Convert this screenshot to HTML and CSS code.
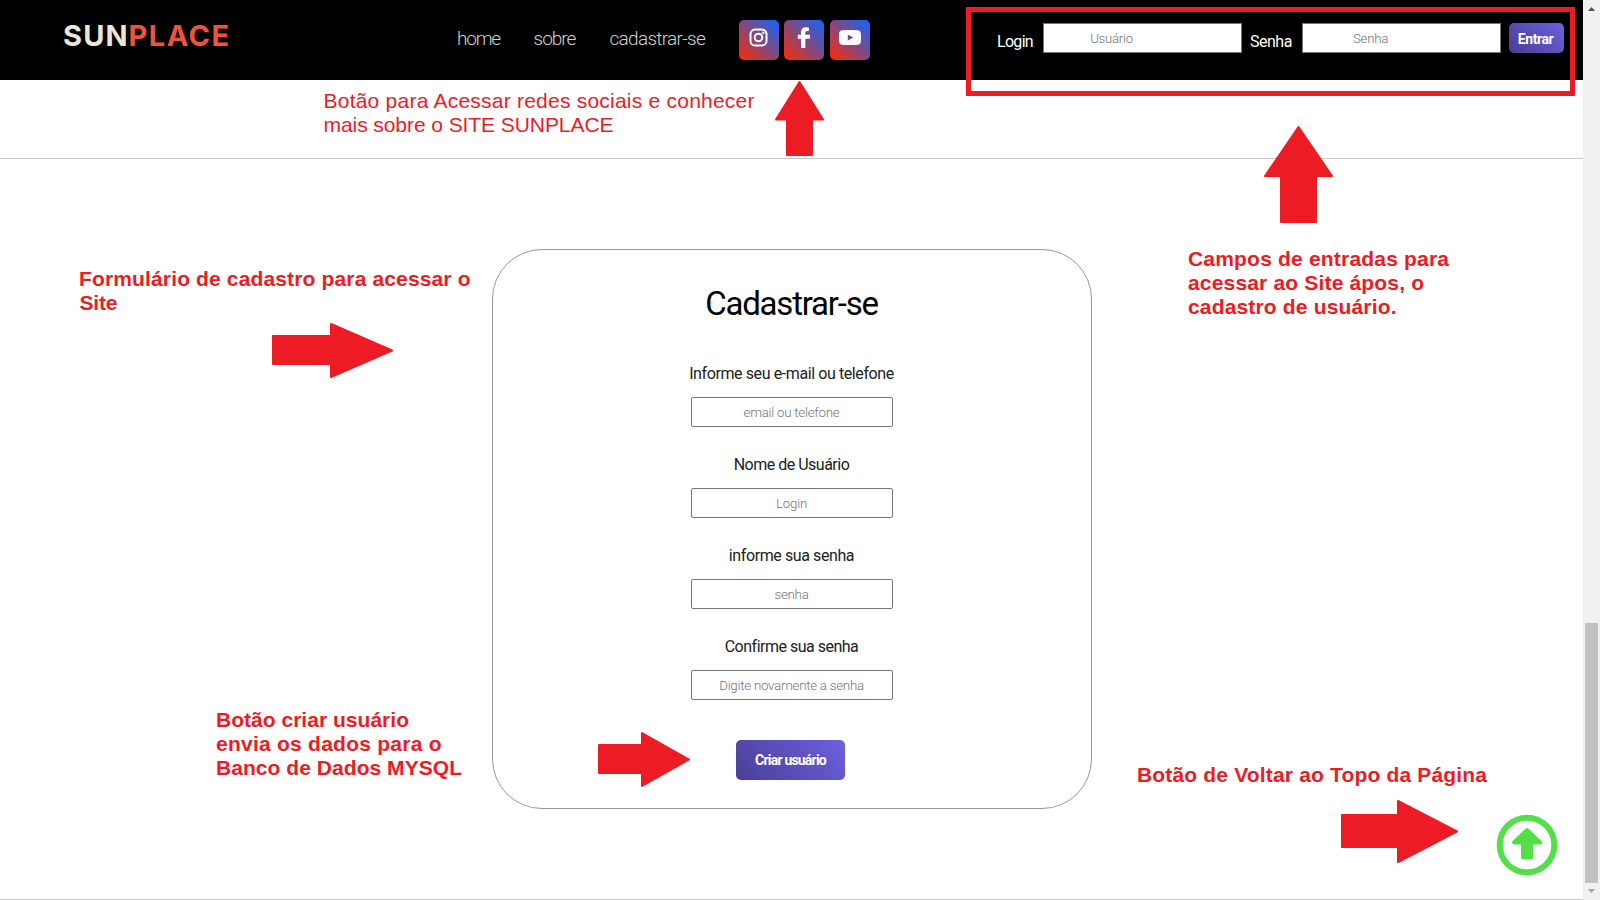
FILE: index.html
```html
<!DOCTYPE html>
<html lang="pt-BR">
<head>
<meta charset="utf-8">
<title>Sunplace</title>
<link rel="stylesheet" href="styles.css">
</head>
<body>
<div class="window">
  <div class="page">
    <header class="topbar">
      <div class="logo"><span class="logo-sun">SUN</span><span class="logo-place">PLACE</span></div>
      <nav class="menu">
        <a class="link link-home">home</a>
        <a class="link link-about">sobre</a>
        <a class="link link-join">cadastrar-se</a>
      </nav>
      <div class="social">
        <a class="social-btn"><svg class="icon" viewBox="0 0 40 40"><rect x="11.5" y="9.5" width="16" height="16" rx="4.6" fill="none" stroke="#fff" stroke-width="2"/><circle cx="19.5" cy="17.5" r="3.8" fill="none" stroke="#fff" stroke-width="2"/><circle cx="24.3" cy="12.7" r="1.2" fill="#fff"/></svg></a>
        <a class="social-btn"><svg class="icon" viewBox="0 0 40 40"><path d="M17 28V18.8H13.8V14.8H17V12.2C17 9 18.9 7.2 21.9 7.2C23.3 7.2 24.900 7.500 24.900 7.500V10.900H23.300C21.700 10.900 21.300 11.800 21.300 12.900V14.800H26.200L25.600 18.800H21.300V28Z" fill="#fff"/></svg></a>
        <a class="social-btn social-last"><svg class="icon" viewBox="0 0 40 40"><path fill-rule="evenodd" d="M12 10.2Q20 9.6 28 10.2Q30.6 10.4 30.8 13Q31.3 17.5 30.8 22Q30.6 24.6 28 24.8Q20 25.4 12 24.8Q9.4 24.6 9.2 22Q8.7 17.5 9.2 13Q9.4 10.4 12 10.2ZM17.8 14.4V20.6L23.3 17.5Z" fill="#fff"/></svg></a>
      </div>
      <form class="login">
        <label class="login-label lab-login">Login</label>
        <input class="login-input" placeholder="Usuário">
        <label class="login-label lab-pass">Senha</label>
        <input class="login-input" placeholder="Senha">
        <button class="btn btn-enter" type="button">Entrar</button>
      </form>
    </header>
    <div class="strip"></div>
    <main class="main">
      <form class="card">
        <h1 class="title">Cadastrar-se</h1>
        <label class="label l1">Informe seu e-mail ou telefone</label>
        <input class="field" placeholder="email ou telefone">
        <label class="label l2">Nome de Usuário</label>
        <input class="field" placeholder="Login">
        <label class="label l3">informe sua senha</label>
        <input class="field" placeholder="senha">
        <label class="label l4">Confirme sua senha</label>
        <input class="field" placeholder="Digite novamente a senha">
        <button class="btn btn-create" type="button">Criar usuário</button>
      </form>
    </main>
  </div>
  <div class="scrollbar">
    <svg class="sb-arrow" viewBox="0 0 17 17"><path d="M5 11H12L8.5 7Z" fill="#505050"/></svg>
    <div class="thumb"></div>
    <svg class="sb-arrow" viewBox="0 0 17 17"><path d="M5 6H12L8.5 10Z" fill="#a3a3a3"/></svg>
  </div>
  <svg class="notes" viewBox="0 0 1600 900">
    <rect x="968.5" y="9.5" width="604" height="84" fill="none" stroke="#ed1c24" stroke-width="5"/>
    <g class="arrows">
      <path d="M799.5 82L823 119.500H812V155H787V119.500H776Z"/>
      <path d="M1298.500 127L1332 176H1316V222H1281V176H1265Z"/>
      <path d="M273 336H331V324L392 350.500L331 377V364H273Z"/>
      <path d="M599 745H642V733L689 759.500L642 786V773H599Z"/>
      <path d="M1342 815H1398V801L1457 831.500L1398 862V847H1342Z"/>
    </g>
    <g class="note">
      <text x="323.500" y="108" textLength="431">Botão para Acessar redes sociais e conhecer</text>
      <text x="323.500" y="132" textLength="290">mais sobre o SITE SUNPLACE</text>
    </g>
    <g class="note note-bold">
      <text x="79" y="286" textLength="391.500">Formulário de cadastro para acessar o</text>
      <text x="79.500" y="310" textLength="38">Site</text>
      <text x="1188" y="266" textLength="261">Campos de entradas para</text>
      <text x="1188" y="290" textLength="236">acessar ao Site ápos, o</text>
      <text x="1188" y="314" textLength="208.500">cadastro de usuário.</text>
      <text x="216" y="727" textLength="193">Botão criar usuário</text>
      <text x="216" y="751" textLength="225.500">envia os dados para o</text>
      <text x="216" y="775" textLength="246">Banco de Dados MYSQL</text>
      <text x="1137" y="782" textLength="350">Botão de Voltar ao Topo da Página</text>
    </g>
  </svg>
  <a class="to-top"><svg class="icon" viewBox="0 0 62 62"><circle cx="31" cy="31" r="27.300" fill="none" stroke="#52df48" stroke-width="6"/><path d="M31 16L44 28.500H35V43.500H27V28.500H18Z" fill="#52df48" stroke="#52df48" stroke-width="4" stroke-linejoin="round"/></svg></a>
</div>
</body>
</html>
```
FILE: styles.css
```css
* { box-sizing: border-box; }
body { margin: 0; font-family: Roboto, sans-serif; background: #fff; overflow: hidden; }
.window { position: relative; display: flex; width: 1600px; height: 900px; }
.page { display: flex; flex-direction: column; width: 1583px; height: 900px; border-bottom: 1px solid #c8c8c8; }
.topbar { display: flex; align-items: flex-start; height: 80px; background: #000; }
.logo { display: flex; width: 393px; padding: 19px 0 0 63px; font: 700 29px/34px Inter, sans-serif; }
.logo-sun { width: 65.5px; color: #ebe7d7; letter-spacing: 1.2px; }
.logo-place { color: #f2523a; letter-spacing: 1.5px; }
.menu { display: flex; width: 346px; padding: 26px 0 0 64px; }
.link { color: #d0d0d0; font-size: 19px; font-weight: 300; line-height: 26px; }
.link-home { width: 76.5px; letter-spacing: -1.2px; }
.link-about { width: 76px; letter-spacing: -1px; }
.link-join { letter-spacing: -0.7px; }
.social { display: flex; gap: 5px; padding-top: 20px; }
.social-last { margin-left: 1px; }
.social-btn { width: 40px; height: 40px; border-radius: 5px; background: linear-gradient(45deg, #ff2a00, #0a66ff); }
.icon { display: block; width: 100%; height: 100%; }
.login { display: flex; align-items: flex-start; margin-left: 127px; padding-top: 23px; }
.login-label { color: #fff; font-size: 16px; line-height: 37px; white-space: nowrap; }
.lab-login { width: 46px; letter-spacing: -0.7px; }
.lab-pass { width: 52px; margin-left: 8px; letter-spacing: -0.5px; }
.login-input { width: 199px; height: 30px; padding: 1px 64px 1px 2px; border: 1px solid #767676; background: #fff; font: 300 13.3px Roboto, sans-serif; letter-spacing: -0.3px; text-align: center; }
.btn { border: 0; border-radius: 5px; background: linear-gradient(45deg, #483f92, #6e60e2); color: #fff; font: 700 14px Roboto, sans-serif; padding: 0; }
.btn-enter { width: 55px; height: 30px; margin-left: 8px; padding: 1px 2px 0 0; letter-spacing: -0.4px; }
.strip { height: 79px; border-bottom: 1px solid #c8c8c8; }
.main { display: flex; justify-content: center; padding-top: 90px; }
.card { display: flex; flex-direction: column; align-items: center; width: 600px; height: 560px; border: 1px solid #999; border-radius: 50px; }
.title { margin: 32px 0 36px; color: #000; font-size: 33px; font-weight: 400; line-height: 44px; letter-spacing: -1.2px; }
.label { height: 24px; color: #212121; font-size: 16px; line-height: 24px; white-space: nowrap; }
.l1 { letter-spacing: -0.4px; }
.l2 { letter-spacing: -0.5px; }
.l3 { letter-spacing: -0.4px; }
.l4 { letter-spacing: -0.5px; }
.field { width: 202px; height: 30px; margin: 11px 0 26px; padding: 1px 2px; border: 1px solid #767676; border-radius: 2px; background: #fff; font: 300 13.3px Roboto, sans-serif; letter-spacing: -0.25px; text-align: center; }
.field::placeholder, .login-input::placeholder { color: #757575; opacity: 1; }
.btn-create { width: 109px; height: 40px; margin: 14px 2px 0 0; letter-spacing: -0.8px; }
.scrollbar { display: flex; flex-direction: column; align-items: center; justify-content: flex-end; width: 17px; height: 900px; background: #f1f1f1; }
.sb-arrow { display: block; width: 17px; height: 17px; }
.sb-arrow:first-child { margin-bottom: auto; }
.thumb { width: 13px; height: 260px; background: #c1c1c1; }
.notes { position: absolute; left: 0; top: 0; width: 1600px; height: 900px; pointer-events: none; }
.arrows { fill: #ed1c24; stroke: #ed1c24; stroke-width: 2; stroke-linejoin: round; }
.note { fill: #ed1c24; font: 400 21px "Liberation Sans", Arial, sans-serif; }
.note-bold { font-weight: 700; }
.to-top { position: absolute; left: 1496px; top: 813.5px; width: 62px; height: 62px; }
```
